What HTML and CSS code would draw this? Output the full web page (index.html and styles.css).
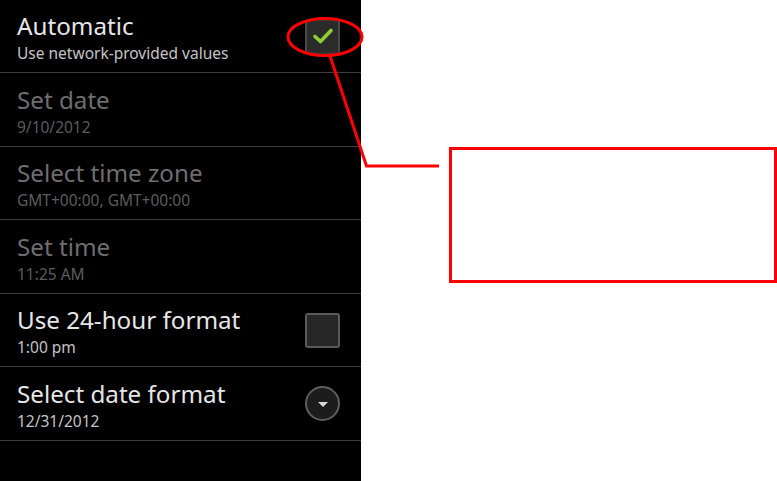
FILE: index.html
```html
<!DOCTYPE html>
<html>
<head>
<meta charset="utf-8">
<link rel="stylesheet" href="styles.css">
</head>
<body>
<div class="page">
  <div class="panel">
    <div class="row">
      <div class="text">
        <div class="title">Automatic</div>
        <div class="sub">Use network-provided values</div>
      </div>
      <div class="check checked">
        <svg width="22" height="18" viewBox="0 0 22 18"><path d="M3 9.5 L8.5 14.5 L19 3.5" fill="none" stroke="#8fcf35" stroke-width="3.6" stroke-linecap="round" stroke-linejoin="round"/></svg>
      </div>
    </div>
    <div class="row disabled">
      <div class="text">
        <div class="title">Set date</div>
        <div class="sub">9/10/2012</div>
      </div>
    </div>
    <div class="row disabled">
      <div class="text">
        <div class="title">Select time zone</div>
        <div class="sub">GMT+00:00, GMT+00:00</div>
      </div>
    </div>
    <div class="row disabled">
      <div class="text">
        <div class="title">Set time</div>
        <div class="sub">11:25 AM</div>
      </div>
    </div>
    <div class="row">
      <div class="text">
        <div class="title">Use 24-hour format</div>
        <div class="sub">1:00 pm</div>
      </div>
      <div class="check"></div>
    </div>
    <div class="row">
      <div class="text">
        <div class="title">Select date format</div>
        <div class="sub">12/31/2012</div>
      </div>
      <div class="drop"><span class="tri"></span></div>
    </div>
  </div>
  <svg class="annot" width="777" height="481" viewBox="0 0 777 481">
    <ellipse cx="325" cy="37" rx="37" ry="18.5" fill="none" stroke="#ff0000" stroke-width="3"/>
    <polyline points="330,56 366.5,166 439,166" fill="none" stroke="#ff0000" stroke-width="3"/>
    <rect x="450.5" y="148.5" width="325" height="133" fill="none" stroke="#ff0000" stroke-width="3"/>
  </svg>
</div>
</body>
</html>
```

FILE: styles.css
```css
html, body {
  margin: 0;
  padding: 0;
  background: #ffffff;
}
.page {
  position: relative;
  width: 777px;
  height: 481px;
  overflow: hidden;
}
.panel {
  width: 361px;
  height: 481px;
  background: #000000;
  font-family: "Noto Sans", "Open Sans", sans-serif;
}
.row {
  display: flex;
  justify-content: space-between;
  align-items: center;
  box-sizing: border-box;
  padding: 0 21px 0 17px;
  border-bottom: 1px solid #3e3e3e;
}
.row:nth-child(odd) {
  height: 73px;
}
.row:nth-child(even) {
  height: 74px;
}
.text {
  display: flex;
  flex-direction: column;
  padding-top: 3px;
}
.title {
  font-size: 24.2px;
  line-height: 28px;
  color: #e6e6e6;
  white-space: nowrap;
}
.sub {
  font-size: 15.5px;
  line-height: 20px;
  margin-top: 3px;
  color: #c4c4c4;
  white-space: nowrap;
}
.disabled .title {
  color: #6e6e6e;
}
.disabled .sub {
  color: #5c5c5c;
}
.check {
  box-sizing: border-box;
  width: 35px;
  height: 35px;
  background: #262626;
  border: 2px solid #5a5a5a;
  border-radius: 3px;
  display: flex;
  align-items: center;
  justify-content: center;
}
.check.checked {
  background: #2b2b2b;
  border-color: #4a4a4a;
  border-top-color: #333;
  border-bottom-color: #333;
}
.drop {
  box-sizing: border-box;
  width: 35px;
  height: 35px;
  border-radius: 50%;
  border: 2px solid #5e5e5e;
  background: #1c1c1c;
  display: flex;
  align-items: center;
  justify-content: center;
}
.tri {
  width: 0;
  height: 0;
  border-left: 5px solid transparent;
  border-right: 5px solid transparent;
  border-top: 5px solid #d8d8d8;
  margin-top: 1px;
}
.annot {
  position: absolute;
  left: 0;
  top: 0;
}
```
